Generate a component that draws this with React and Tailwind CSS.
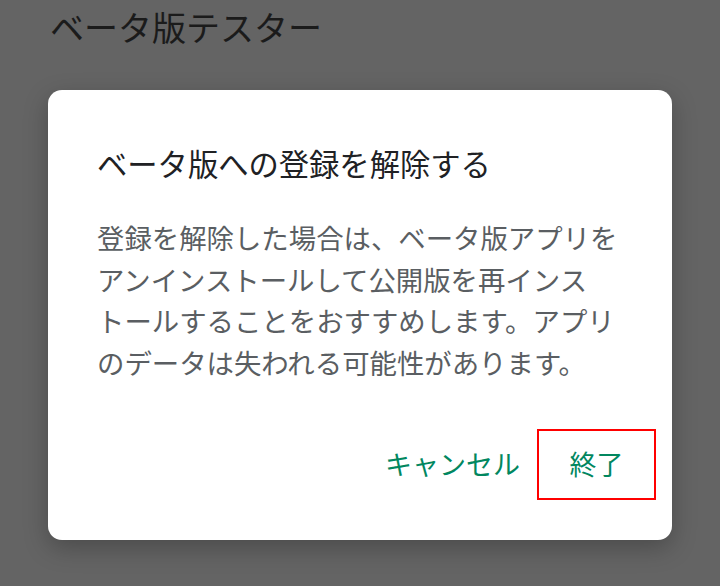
import React from "react";

const font = { fontFamily: '"Noto Sans CJK JP", "Noto Sans", sans-serif' };

const App = () => {
  return (
    <div
      className="w-[720px] h-[586px] overflow-hidden bg-[#646464] relative"
      style={font}
    >
      <h1 className="pl-[50px] pt-[7px] text-[34px] leading-[40px] text-[#1b1b1b] font-normal">
        ベータ版テスター
      </h1>

      <div className="absolute left-[48px] top-[90px] w-[624px] h-[450px] bg-white rounded-[14px] shadow-[0_8px_24px_rgba(0,0,0,0.25)] flex flex-col">
        <h2 className="pl-[49px] pt-[54px] text-[30.3px] leading-[39px] text-[#202124] font-normal">
          ベータ版への登録を解除する
        </h2>
        <p className="pl-[49px] pr-[30px] mt-[34px] text-[27.4px] leading-[41.5px] text-[#5a5e62]">
          登録を解除した場合は、ベータ版アプリを
          <br />
          アンインストールして公開版を再インス
          <br />
          トールすることをおすすめします。アプリ
          <br />
          のデータは失われる可能性があります。
        </p>
        <div className="flex justify-end items-center pr-[16px] mt-auto mb-[40px]">
          <button className="h-[71px] px-[17px] text-[27px] text-[#01875f]">
            キャンセル
          </button>
          <button className="h-[71px] w-[119px] border-2 border-[#ff0000] text-[27px] text-[#01875f]">
            終了
          </button>
        </div>
      </div>
    </div>
  );
};

export default App;
